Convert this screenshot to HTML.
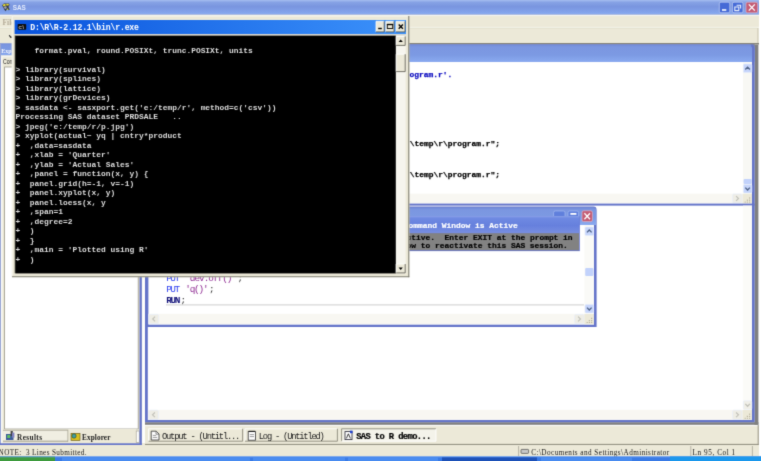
<!DOCTYPE html>
<html><head><meta charset="utf-8"><title>SAS</title>
<style>
html,body{margin:0;padding:0;background:#fff;overflow:hidden;width:761px;height:461px}
#c{position:relative;width:761px;height:461px;overflow:hidden}
svg{display:block}
#w{position:absolute;left:-6px;top:-6px;width:773px;height:473px;filter:url(#soft)}
text{white-space:pre}
.ttl{font:bold 7.8px "Liberation Sans",sans-serif;fill:#e4ebfb}
.menu{font:bold 7.4px "Liberation Serif",serif;fill:#b3ab98}
.ptl{font:bold 6.6px "Liberation Serif",serif;fill:#f4f6fc}
.sm{font:6.9px "Liberation Sans",sans-serif;fill:#202020}
.tab{font:bold 7.2px "Liberation Serif",serif;fill:#202020}
.wtab{font:8.8px "Liberation Mono",monospace;fill:#181818}
.wtabb{font:bold 8.8px "Liberation Mono",monospace;fill:#000;stroke:#000;stroke-width:0.2px}
.stat{font:7.2px "Liberation Serif",serif;fill:#181818}
.con{font:bold 7.927px "Liberation Mono",monospace;fill:#dedede}
.ctl{font:bold 8.2px "Liberation Mono",monospace;fill:#ffffff}
.cico{font:bold 4.6px "Liberation Sans",sans-serif;fill:#c8c8c8}
.logb{font:bold 7.927px "Liberation Mono",monospace;fill:#0a0ac0;stroke:#0a0ac0;stroke-width:0.25px}
.logk{font:bold 7.927px "Liberation Mono",monospace;fill:#000;stroke:#000;stroke-width:0.25px}
.edb{font:9.4px "Liberation Mono",monospace;fill:#2a3cf0}
.edp{font:9.4px "Liberation Mono",monospace;fill:#8e2a92}
.edk{font:9.4px "Liberation Mono",monospace;fill:#303030}
.edn{font:bold 9.4px "Liberation Mono",monospace;fill:#101078}
.popt{font:bold 7.927px "Liberation Mono",monospace;fill:#fff;stroke:#fff;stroke-width:0.2px}
.popb{font:bold 7.927px "Liberation Mono",monospace;fill:#000;stroke:#000;stroke-width:0.2px}
</style></head>
<body>
<div id="c"><div id="w"><svg width="773" height="473" viewBox="-6 -6 773 473">
<defs>
<filter id="soft" x="0" y="0" width="100%" height="100%" color-interpolation-filters="sRGB"><feConvolveMatrix order="3" kernelMatrix="1 6 1 6 36 6 1 6 1" divisor="64" edgeMode="duplicate" preserveAlpha="true"/></filter>
<linearGradient id="gTitle" x1="0" y1="0" x2="0" y2="1">
<stop offset="0" stop-color="#a4bcef"/><stop offset="0.16" stop-color="#86a2e5"/><stop offset="0.45" stop-color="#7995df"/><stop offset="0.8" stop-color="#82a2ea"/><stop offset="0.92" stop-color="#86a8ee"/><stop offset="1" stop-color="#6f8ad6"/>
</linearGradient>
<linearGradient id="gChild" x1="0" y1="0" x2="0" y2="1">
<stop offset="0" stop-color="#6f88d6"/><stop offset="0.14" stop-color="#7b96e0"/><stop offset="0.6" stop-color="#7c9ae3"/><stop offset="1" stop-color="#8aaaf0"/>
</linearGradient>
<linearGradient id="gCon" x1="0" y1="0" x2="1" y2="0">
<stop offset="0" stop-color="#0852dc"/><stop offset="1" stop-color="#3c92fa"/>
</linearGradient>
<linearGradient id="gPop" x1="0" y1="0" x2="0" y2="1">
<stop offset="0" stop-color="#90a8ec"/><stop offset="0.1" stop-color="#6f8ae2"/><stop offset="0.55" stop-color="#6680dd"/><stop offset="1" stop-color="#788ee0"/>
</linearGradient>
</defs>
<rect x="-6" y="-6" width="773" height="473" fill="#ffffff" />
<rect x="-6" y="-6" width="765" height="462.5" fill="#ece9d8" />
<rect x="-6" y="-6" width="765" height="7" fill="#a4bcef" />
<rect x="-6" y="0" width="765" height="14.7" fill="url(#gTitle)" />
<g><path d="M2 5.4L4 3.6L9 3.4L9.6 5L8.4 7L9.8 9.6L8.6 10.2L7 9L5.6 11.2L4.2 9.6L3.4 7.4Z" fill="#34384a"/><path d="M2.6 4.8l2.6-1l0.6 1.6l-2.2 1z" fill="#e8dc30"/><path d="M6.2 3.8l2.6 0.2l-0.2 1.4l-2.2 0z" fill="#e8dc30"/><circle cx="5.4" cy="7.6" r="1.3" fill="#a0a4b0"/><circle cx="7.6" cy="9.2" r="0.8" fill="#d8e040"/></g>
<text x="12.7" y="10.1" class="ttl"  textLength="13.2" lengthAdjust="spacingAndGlyphs">SAS</text>
<rect x="719.3" y="2.2" width="10.5" height="10.6" rx="1.6" fill="#456ad6" stroke="#c8d6f4" stroke-width="0.7"/>
<rect x="722" y="9.2" width="4.3" height="1.6" fill="#ffffff" />
<rect x="732.4" y="2.2" width="10.6" height="10.6" rx="1.6" fill="#456ad6" stroke="#c8d6f4" stroke-width="0.7"/>
<path d="M736.6 5.2h4v3.4M734.8 7h4v3.6h-4z" fill="none" stroke="#e8eefc" stroke-width="1.1"/>
<rect x="746" y="2.2" width="11.6" height="10.6" rx="1.6" fill="#c45c74" stroke="#dcb4c8" stroke-width="0.7"/>
<path d="M748.8 4.4l6 6.2M754.8 4.4l-6 6.2" stroke="#ffffff" stroke-width="1.35"/>
<line x1="-6" y1="15.3" x2="759" y2="15.3" stroke="#f6f6f2" stroke-width="1.2" />
<text x="2.6" y="24.6" class="menu" >File</text>
<line x1="-6" y1="27.4" x2="759" y2="27.4" stroke="#f7f6ee" stroke-width="1" />
<line x1="-6" y1="28.2" x2="757.5" y2="28.2" stroke="#e0dcca" stroke-width="0.7" />
<line x1="757.8" y1="28" x2="757.8" y2="43.2" stroke="#c8c4b0" stroke-width="0.8" />
<path d="M9.2 35.2l1.6 2.2l1.2-0.4" fill="none" stroke="#202020" stroke-width="1.1"/>
<rect x="142" y="43.2" width="617" height="1.5" fill="#6c6a62" />
<rect x="142" y="44.6" width="617" height="380.4" fill="#ffffff" />
<rect x="754.5" y="44.6" width="3.9" height="380.2" fill="#808080" />
<rect x="142" y="422.2" width="616.4" height="2.6" fill="#808080" />
<rect x="142" y="44.6" width="3" height="398.4" fill="#fdfdfb" />
<rect x="-6" y="43.3" width="145.5" height="12.3" fill="url(#gChild)" />
<text x="1.2" y="53.1" class="ptl"  textLength="10.4" lengthAdjust="spacingAndGlyphs">Exp</text>
<rect x="-6" y="55.6" width="145.5" height="387.7" fill="#ece9d8" />
<rect x="0" y="55.6" width="139.5" height="1.6" fill="#f6f5ee" />
<rect x="-6" y="43.3" width="7" height="401.7" fill="#9aa6d4" />
<rect x="1" y="57.2" width="1.4" height="386.1" fill="#fbfbf8" />
<text x="3" y="64.4" class="sm"  textLength="9.4" lengthAdjust="spacingAndGlyphs">Con</text>
<rect x="4.2" y="66.6" width="134.4" height="362.6" fill="#9c9a8c" />
<rect x="5" y="67.4" width="132.8" height="361.2" fill="#ffffff" />
<rect x="3" y="430.2" width="65" height="11" fill="#f0eee2" />
<line x1="3" y1="441.2" x2="68" y2="441.2" stroke="#9a9888" stroke-width="0.9" />
<line x1="68" y1="430" x2="68" y2="441.5" stroke="#9a9888" stroke-width="0.9" />
<line x1="3" y1="430.3" x2="68" y2="430.3" stroke="#a8a698" stroke-width="0.8" />
<rect x="68.5" y="429" width="67.5" height="14.2" fill="#ece9d8" />
<g><rect x="6" y="434" width="7.5" height="6" fill="#3a5a9a"/><rect x="7.2" y="435" width="3" height="3" fill="#60c060"/><rect x="10.6" y="431" width="2.2" height="5" fill="#404040"/><rect x="12" y="432.6" width="2.4" height="5" fill="#8080c0"/></g>
<text x="17" y="440" class="tab"  textLength="25" lengthAdjust="spacing">Results</text>
<g><rect x="71" y="433.4" width="9" height="7" fill="#d8c020" stroke="#605010" stroke-width="0.6"/><circle cx="74" cy="436" r="2.2" fill="#40a0a0" stroke="#203020" stroke-width="0.5"/></g>
<text x="82" y="440.2" class="tab"  textLength="28.4" lengthAdjust="spacing">Explorer</text>
<rect x="136.2" y="431" width="3" height="11.4" fill="#ffffff" stroke="#9a9888" stroke-width="0.6"/>
<rect x="139.5" y="44.4" width="2.3" height="400.6" fill="#6474c9" />
<rect x="-6" y="443.3" width="147.8" height="1.7" fill="#6474c9" />
<rect x="145" y="44.4" width="609.6" height="377.8" fill="#6474c9" />
<rect x="147.8" y="62" width="604.2" height="358" fill="#ffffff" />
<rect x="750" y="44.4" width="4.6" height="5.6" fill="#808080" />
<path d="M145 62V44.4H751.4Q754.6 44.4 754.6 47.8V62Z" fill="url(#gChild)"/>
<path d="M753.3 62V48Q753.3 46 751.4 45.2" fill="none" stroke="#6474c9" stroke-width="2.4"/>
<rect x="148.2" y="62" width="603.8" height="141.6" fill="#ffffff" />
<text x="409.6" y="77.2" class="logb" >ogram.r'.</text>
<text x="409.8" y="146.1" class="logk" >\temp\r\program.r";</text>
<text x="409.8" y="176.7" class="logk" >\temp\r\program.r";</text>
<rect x="743" y="62.4" width="9" height="131" fill="#f8f8f4" />
<rect x="743.4" y="64" width="8.4" height="8.6" rx="1.2" fill="#c6d5fb" stroke="#e6ecfc" stroke-width="0.6"/>
<path d="M745.3 69.5L747.6 67.1L749.9 69.5" fill="none" stroke="#4d6185" stroke-width="1.3"/>
<rect x="743.6" y="179" width="8" height="5" fill="#c2d2fb" rx="1"/>
<rect x="743.4" y="184.6" width="8.4" height="8.4" rx="1.2" fill="#c6d5fb" stroke="#e6ecfc" stroke-width="0.6"/>
<path d="M745.3 187.6L747.6 190L749.9 187.6" fill="none" stroke="#4d6185" stroke-width="1.3"/>
<rect x="148.2" y="193.6" width="603.8" height="9.8" fill="#f8f7f2" />
<rect x="732.6" y="194" width="9.4" height="9" rx="1.2" fill="#eeede5" stroke="#e6ecfc" stroke-width="0.6"/>
<path d="M736.1 196.2L738.5 198.5L736.1 200.8" fill="none" stroke="#c0c0b8" stroke-width="1.1"/>
<rect x="742.6" y="193.8" width="9.4" height="9.6" fill="#ece9d8" />
<g fill="#b8b4a0"><rect x="749" y="199.6" width="1.2" height="1.2"/><rect x="746.8" y="199.6" width="1.2" height="1.2"/><rect x="749" y="197.4" width="1.2" height="1.2"/><rect x="749" y="201.6" width="1.2" height="1.0"/><rect x="746.8" y="201.6" width="1.2" height="1"/><rect x="744.6" y="201.6" width="1.2" height="1"/></g>
<rect x="145" y="203.6" width="609.6" height="2" fill="#6474c9" />
<rect x="743" y="205.6" width="9" height="204" fill="#fbfbf8" />
<rect x="743.4" y="400.8" width="8.4" height="8.6" rx="1.2" fill="#f0efe8" stroke="#e6ecfc" stroke-width="0.6"/>
<path d="M745.3 403.9L747.6 406.3L749.9 403.9" fill="none" stroke="#c0c0b8" stroke-width="1.3"/>
<rect x="148.2" y="409.8" width="603.8" height="10" fill="#f8f7f2" />
<rect x="149" y="410.2" width="9.4" height="9.2" rx="1.2" fill="#eeede5" stroke="#e6ecfc" stroke-width="0.6"/>
<path d="M154.9 412.5L152.5 414.8L154.9 417.1" fill="none" stroke="#c0c0b8" stroke-width="1.1"/>
<rect x="732.6" y="410.2" width="9.4" height="9.2" rx="1.2" fill="#eeede5" stroke="#e6ecfc" stroke-width="0.6"/>
<path d="M736.1 412.5L738.5 414.8L736.1 417.1" fill="none" stroke="#c0c0b8" stroke-width="1.1"/>
<rect x="742.6" y="410" width="9.4" height="9.8" fill="#ece9d8" />
<g fill="#b8b4a0"><rect x="749" y="415.8" width="1.2" height="1.2"/><rect x="746.8" y="415.8" width="1.2" height="1.2"/><rect x="749" y="413.6" width="1.2" height="1.2"/><rect x="749" y="417.8" width="1.2" height="1.0"/><rect x="746.8" y="417.8" width="1.2" height="1"/><rect x="744.6" y="417.8" width="1.2" height="1"/></g>
<path d="M145 327V206.6H593.5Q596.6 206.6 596.6 210V327Z" fill="#6474c9"/>
<path d="M145.6 225V207.2H593.3Q596 207.2 596 210V225Z" fill="url(#gChild)"/>
<rect x="148.4" y="225" width="445.6" height="99.6" fill="#ffffff" />
<rect x="553.6" y="211" width="11.4" height="10.6" rx="1.6" fill="#5f7fdc" stroke="#a8bcf0" stroke-width="0.7"/>
<rect x="568" y="211" width="10.6" height="10.6" rx="1.6" fill="#5f7fdc" stroke="#a8bcf0" stroke-width="0.7"/>
<rect x="570.4" y="213" width="6" height="1.8" fill="#ffffff" />
<rect x="582" y="210.8" width="10.4" height="10.8" rx="1.6" fill="#c45c74" stroke="#dcb4c8" stroke-width="0.7"/>
<path d="M584.4 213.2l5.6 6M590 213.2l-5.6 6" stroke="#ffffff" stroke-width="1.25"/>
<rect x="584.4" y="225" width="9.6" height="88.6" fill="#fafaf7" />
<rect x="585" y="227" width="8.6" height="8.4" rx="1.2" fill="#c6d5fb" stroke="#e6ecfc" stroke-width="0.6"/>
<path d="M587 232.4L589.3 230L591.6 232.4" fill="none" stroke="#4d6185" stroke-width="1.3"/>
<rect x="585.2" y="268" width="8.2" height="8" fill="#c2d2fb" rx="1"/>
<rect x="585" y="304.6" width="8.6" height="8.4" rx="1.2" fill="#c6d5fb" stroke="#e6ecfc" stroke-width="0.6"/>
<path d="M587 307.6L589.3 310L591.6 307.6" fill="none" stroke="#4d6185" stroke-width="1.3"/>
<rect x="148.4" y="313.8" width="445.6" height="10.4" fill="#f8f7f2" />
<rect x="149.2" y="314.4" width="9.4" height="9.2" rx="1.2" fill="#eeede5" stroke="#e6ecfc" stroke-width="0.6"/>
<path d="M155.1 316.7L152.7 319L155.1 321.3" fill="none" stroke="#c0c0b8" stroke-width="1.1"/>
<rect x="574.6" y="314.4" width="9.4" height="9.2" rx="1.2" fill="#eeede5" stroke="#e6ecfc" stroke-width="0.6"/>
<path d="M578.1 316.7L580.5 319L578.1 321.3" fill="none" stroke="#c0c0b8" stroke-width="1.1"/>
<rect x="584.4" y="314" width="9.6" height="10.2" fill="#ece9d8" />
<g fill="#b8b4a0"><rect x="591" y="320" width="1.2" height="1.2"/><rect x="588.8" y="320" width="1.2" height="1.2"/><rect x="591" y="317.8" width="1.2" height="1.2"/><rect x="591" y="322" width="1.2" height="1.0"/><rect x="588.8" y="322" width="1.2" height="1"/><rect x="586.6" y="322" width="1.2" height="1"/></g>
<text x="166.2" y="281.4" class="edb"  textLength="13.868" lengthAdjust="spacing">PUT</text>
<text x="185.224" y="281.4" class="edp"  textLength="51.916" lengthAdjust="spacing">'dev.off()'</text>
<text x="237.54" y="281.4" class="edk" >;</text>
<text x="166.2" y="292.2" class="edb"  textLength="13.868" lengthAdjust="spacing">PUT</text>
<text x="185.224" y="292.2" class="edp"  textLength="23.38" lengthAdjust="spacing">'q()'</text>
<text x="209.004" y="292.2" class="edk" >;</text>
<text x="166.2" y="303.2" class="edn"  textLength="14.068" lengthAdjust="spacing">RUN</text>
<text x="180.468" y="303.2" class="edk" >;</text>
<line x1="166" y1="304.9" x2="584" y2="304.9" stroke="#c0c0c0" stroke-width="0.8" />
<rect x="405" y="216" width="174.8" height="35.1" fill="#6676d2" />
<rect x="405" y="216.2" width="174.4" height="17" fill="url(#gPop)" />
<rect x="405" y="233.2" width="174" height="17.1" fill="#828282" />
<text x="408.6" y="227.6" class="popt"  textLength="109.2" lengthAdjust="spacing">ommand Window is Active</text>
<text x="406.6" y="240.4" class="popb"  textLength="166" lengthAdjust="spacing">ctive.  Enter EXIT at the prompt in</text>
<text x="406.6" y="248.2" class="popb"  textLength="161.2" lengthAdjust="spacing">ow to reactivate this SAS session.</text>
<rect x="145" y="425" width="613.6" height="19" fill="#ece9d8" />
<line x1="145" y1="425.6" x2="758.6" y2="425.6" stroke="#ffffff" stroke-width="0.9" />
<line x1="145" y1="444.4" x2="758.6" y2="444.4" stroke="#8c8a7c" stroke-width="1" />
<line x1="758.2" y1="425" x2="758.2" y2="445" stroke="#8c8a7c" stroke-width="0.9" />
<rect x="148.6" y="428.8" width="94" height="12.4" fill="#ece9d8" />
<path d="M148.6 441.2V428.8H242.6" fill="none" stroke="#ffffff" stroke-width="0.9"/>
<path d="M148.6 441.2H242.6V428.8" fill="none" stroke="#8c8a7c" stroke-width="0.9"/>
<rect x="245" y="428.8" width="92.4" height="12.4" fill="#ece9d8" />
<path d="M245 441.2V428.8H337.4" fill="none" stroke="#ffffff" stroke-width="0.9"/>
<path d="M245 441.2H337.4V428.8" fill="none" stroke="#8c8a7c" stroke-width="0.9"/>
<rect x="341.6" y="428.8" width="94.4" height="12.4" fill="#f4f3ea" />
<path d="M341.6 441.2V428.8H436" fill="none" stroke="#8c8a7c" stroke-width="0.9"/>
<path d="M341.6 441.2H436V428.8" fill="none" stroke="#ffffff" stroke-width="0.9"/>
<g><path d="M151.2 431.2h5l2.8 2.8v6h-7.8z" fill="#ffffff" stroke="#303030" stroke-width="0.8"/><path d="M156 431.4v2.8h2.8" fill="none" stroke="#404040" stroke-width="0.6"/><path d="M152.8 435.4h3.4M152.8 437.4h4.4" stroke="#707070" stroke-width="0.7"/></g>
<g><rect x="248.2" y="431.6" width="7.4" height="8.6" fill="#ffffff" stroke="#303030" stroke-width="0.8"/><path d="M248.6 431.4h6.6" stroke="#202020" stroke-width="1.2"/><path d="M249.8 434.6h4.2M249.8 436.6h4.2" stroke="#707070" stroke-width="0.7"/></g>
<g><rect x="345" y="431.6" width="7" height="8" fill="#ffffff" stroke="#202030" stroke-width="0.8"/><path d="M346.4 438.4l2-4.6l2 4.6" fill="none" stroke="#101010" stroke-width="0.8"/><rect x="350" y="430.6" width="2.6" height="2.6" fill="#2040d0"/></g>
<text x="162" y="438.8" class="wtab"  textLength="78.4" lengthAdjust="spacing">Output - (Untitl...</text>
<text x="258.8" y="438.8" class="wtab"  textLength="66" lengthAdjust="spacing">Log - (Untitled)</text>
<text x="356.2" y="438.8" class="wtabb"  textLength="75.2" lengthAdjust="spacing">SAS to R demo...</text>
<rect x="-6" y="445" width="765" height="11.5" fill="#ece9d8" />
<text x="-1.4" y="455.3" class="stat"  textLength="88" lengthAdjust="spacing">NOTE:  3 Lines Submitted.</text>
<line x1="518.6" y1="446" x2="518.6" y2="456" stroke="#a8a698" stroke-width="0.8" />
<line x1="690.8" y1="446" x2="690.8" y2="456" stroke="#a8a698" stroke-width="0.8" />
<line x1="752.4" y1="446" x2="752.4" y2="456" stroke="#a8a698" stroke-width="0.8" />
<g><rect x="521" y="449.4" width="7.6" height="4" rx="0.8" fill="#c8c8c8" stroke="#303030" stroke-width="0.6"/></g>
<text x="531.2" y="455.3" class="stat"  textLength="138" lengthAdjust="spacing">C:\Documents and Settings\Administrator</text>
<text x="692.6" y="455.3" class="stat"  textLength="42.6" lengthAdjust="spacing">Ln 95, Col 1</text>
<rect x="-6" y="456.5" width="773" height="10.5" fill="#3a7be6" />
<rect x="-6" y="456.5" width="61" height="10.5" fill="#3f9c3f" />
<line x1="-6" y1="456.8" x2="767" y2="456.8" stroke="#6ea0f0" stroke-width="0.8" />
<rect x="62" y="457.4" width="188" height="9.6" fill="#4a8cf0" />
<rect x="253" y="457.4" width="92" height="9.6" fill="#4a8cf0" />
<rect x="348" y="457.4" width="90" height="9.6" fill="#4a8cf0" />
<rect x="442" y="457.4" width="95" height="9.6" fill="#1e52b8" />
<rect x="541" y="457.4" width="91" height="9.6" fill="#4a8cf0" />
<rect x="670" y="456.5" width="97" height="10.5" fill="#1c98ec" />
<rect x="11.8" y="15.6" width="397.6" height="261.6" fill="#ece9d8" />
<path d="M12.2 277V16H409" fill="none" stroke="#f8f7f0" stroke-width="0.9"/>
<rect x="408.3" y="16" width="1" height="261.2" fill="#77756a" />
<rect x="12" y="276.3" width="397.3" height="0.9" fill="#77756a" />
<rect x="14.6" y="20" width="391.4" height="14" fill="url(#gCon)" />
<rect x="17.6" y="23.9" width="8.6" height="5.9" fill="#0c0c0c" rx="0.8"/>
<text x="18.4" y="28.6" class="cico" >c:\</text>
<text x="30.2" y="29.9" class="ctl"  textLength="108.8" lengthAdjust="spacing">D:\R\R-2.12.1\bin\r.exe</text>
<rect x="376" y="21.3" width="8.2" height="10.6" fill="#ece9d8" />
<path d="M376 31.9V21.3H384.2" fill="none" stroke="#ffffff" stroke-width="0.8"/>
<path d="M376 31.9H384.2V21.3" fill="none" stroke="#55534a" stroke-width="0.8"/>
<rect x="378.2" y="27.8" width="3.6" height="1.4" fill="#000000" />
<rect x="385.8" y="21.3" width="8.2" height="10.6" fill="#ece9d8" />
<path d="M385.8 31.9V21.3H394" fill="none" stroke="#ffffff" stroke-width="0.8"/>
<path d="M385.8 31.9H394V21.3" fill="none" stroke="#55534a" stroke-width="0.8"/>
<rect x="387.3" y="24.6" width="5.4" height="3.9" fill="none" stroke="#000" stroke-width="0.9"/><line x1="386.9" y1="24.5" x2="393.1" y2="24.5" stroke="#000" stroke-width="1.3"/>
<rect x="396" y="21.3" width="9" height="10.6" fill="#ece9d8" />
<path d="M396 31.9V21.3H405" fill="none" stroke="#ffffff" stroke-width="0.8"/>
<path d="M396 31.9H405V21.3" fill="none" stroke="#55534a" stroke-width="0.8"/>
<path d="M398.7 24.6l4.2 4.2M402.9 24.6l-4.2 4.2" stroke="#000" stroke-width="1.35"/>
<rect x="14.6" y="34" width="391.4" height="1.4" fill="#d6d6d2" />
<rect x="14.6" y="35.3" width="381.2" height="238" fill="#6e6c60" />
<rect x="15.4" y="36" width="380.6" height="237.3" fill="#000000" />
<rect x="395.8" y="36" width="9.8" height="237.3" fill="#f6f5ee" />
<rect x="396.2" y="36.4" width="9" height="9" fill="#ece9d8" />
<path d="M396.2 45.4V36.4H405.2" fill="none" stroke="#ffffff" stroke-width="0.8"/>
<path d="M396.2 45.4H405.2V36.4" fill="none" stroke="#55534a" stroke-width="0.8"/>
<path d="M398.6 42l2.1-2.4l2.1 2.4z" fill="#000"/>
<rect x="396.2" y="54.2" width="9" height="17.4" fill="#ece9d8" />
<path d="M396.2 71.6V54.2H405.2" fill="none" stroke="#ffffff" stroke-width="0.8"/>
<path d="M396.2 71.6H405.2V54.2" fill="none" stroke="#55534a" stroke-width="0.8"/>
<rect x="396.2" y="264" width="9" height="8.9" fill="#ece9d8" />
<path d="M396.2 272.9V264H405.2" fill="none" stroke="#ffffff" stroke-width="0.8"/>
<path d="M396.2 272.9H405.2V264" fill="none" stroke="#55534a" stroke-width="0.8"/>
<path d="M398.6 267.6l2.1 2.4l2.1-2.4z" fill="#000"/>
<text x="15.6" y="52.612" class="con" >    format.pval, round.POSIXt, trunc.POSIXt, units</text>
<text x="15.6" y="71.636" class="con" >&gt; library(survival)</text>
<text x="15.6" y="81.148" class="con" >&gt; library(splines)</text>
<text x="15.6" y="90.66" class="con" >&gt; library(lattice)</text>
<text x="15.6" y="100.172" class="con" >&gt; library(grDevices)</text>
<text x="15.6" y="109.684" class="con" >&gt; sasdata &lt;- sasxport.get('e:/temp/r', method=c('csv'))</text>
<text x="15.6" y="119.196" class="con" >Processing SAS dataset PRDSALE   ..</text>
<text x="15.6" y="128.708" class="con" >&gt; jpeg('e:/temp/r/p.jpg')</text>
<text x="15.6" y="138.22" class="con" >&gt; xyplot(actual~ yq | cntry*product</text>
<text x="15.6" y="147.732" class="con" >+  ,data=sasdata</text>
<text x="15.6" y="157.244" class="con" >+  ,xlab = 'Quarter'</text>
<text x="15.6" y="166.756" class="con" >+  ,ylab = 'Actual Sales'</text>
<text x="15.6" y="176.268" class="con" >+  ,panel = function(x, y) {</text>
<text x="15.6" y="185.78" class="con" >+  panel.grid(h=-1, v=-1)</text>
<text x="15.6" y="195.292" class="con" >+  panel.xyplot(x, y)</text>
<text x="15.6" y="204.804" class="con" >+  panel.loess(x, y</text>
<text x="15.6" y="214.316" class="con" >+  ,span=1</text>
<text x="15.6" y="223.828" class="con" >+  ,degree=2</text>
<text x="15.6" y="233.34" class="con" >+  )</text>
<text x="15.6" y="242.852" class="con" >+  }</text>
<text x="15.6" y="252.364" class="con" >+  ,main = 'Plotted using R'</text>
<text x="15.6" y="261.876" class="con" >+  )</text>
</svg></div></div>
</body></html>
